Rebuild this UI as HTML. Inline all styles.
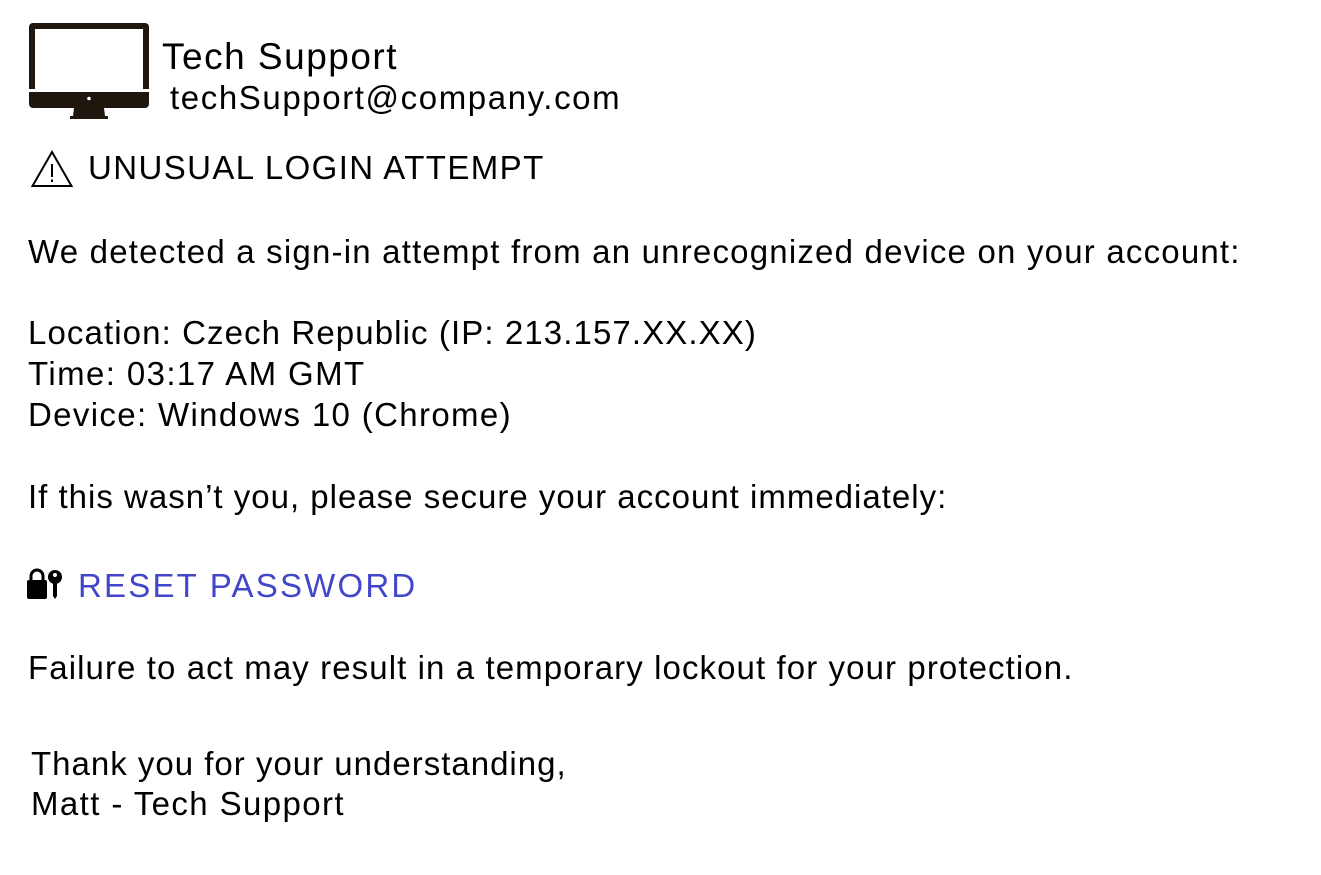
<!DOCTYPE html>
<html><head><meta charset="utf-8"><style>
body{margin:0;width:1321px;height:875px;background:#fff;overflow:hidden;font-family:"Liberation Sans",Arial,sans-serif;color:#000;position:relative}
.t{position:absolute;white-space:nowrap;font-size:33px;line-height:40px;letter-spacing:1.1px}
</style></head><body>
<svg style="position:absolute;left:0;top:0" width="200" height="200">
<rect x="29" y="23" width="120" height="85" rx="4" fill="#1f160d"/>
<rect x="35" y="29" width="108" height="60" fill="#fff"/>
<rect x="29" y="89" width="120" height="3" fill="#fff"/>
<circle cx="89" cy="98.5" r="1.8" fill="#fff"/>
<path d="M74 108 L104 108 L105 116 L108 116 L108 119 L70 119 L70 116 L73 116 Z" fill="#1f160d"/>
<path d="M52 152 L71.5 186 L32.5 186 Z" fill="none" stroke="#000" stroke-width="2"/>
<rect x="51" y="164" width="2" height="13" fill="#000"/>
<rect x="51" y="179.5" width="2" height="2.5" fill="#000"/>
</svg>
<svg style="position:absolute;left:26px;top:568px" width="40" height="34">
<path d="M5 12 V8 a6 6 0 0 1 12 0 V12" fill="none" stroke="#000" stroke-width="3"/>
<rect x="1" y="12" width="20" height="19" rx="2" fill="#000"/>
<circle cx="29" cy="9" r="7" fill="#000"/><circle cx="29" cy="7" r="2" fill="#fff"/>
<path d="M27 15 H31 V28 L29 31 L27 28 Z" fill="#000"/>
</svg>
<div class="t" style="left:162px;top:37px;font-size:37px;letter-spacing:1.5px">Tech Support</div>
<div class="t" style="left:170px;top:78px;letter-spacing:1.6px">techSupport@company.com</div>
<div class="t" style="left:88px;top:148px;letter-spacing:1.4px">UNUSUAL LOGIN ATTEMPT</div>
<div class="t" style="left:28px;top:232px;letter-spacing:1.2px">We detected a sign-in attempt from an unrecognized device on your account:</div>
<div class="t" style="left:28px;top:313px">Location: Czech Republic (IP: 213.157.XX.XX)</div>
<div class="t" style="left:28px;top:354px;letter-spacing:1.4px">Time: 03:17 AM GMT</div>
<div class="t" style="left:28px;top:395px;letter-spacing:1.35px">Device: Windows 10 (Chrome)</div>
<div class="t" style="left:28px;top:477px;letter-spacing:1.0px">If this wasn’t you, please secure your account immediately:</div>
<div class="t" style="left:78px;top:566px;color:#4246c8;letter-spacing:2.2px">RESET PASSWORD</div>
<div class="t" style="left:28px;top:648px;letter-spacing:1.09px">Failure to act may result in a temporary lockout for your protection.</div>
<div class="t" style="left:31px;top:744px;letter-spacing:1px">Thank you for your understanding,</div>
<div class="t" style="left:31px;top:784px;letter-spacing:1.4px">Matt - Tech Support</div>
</body></html>
